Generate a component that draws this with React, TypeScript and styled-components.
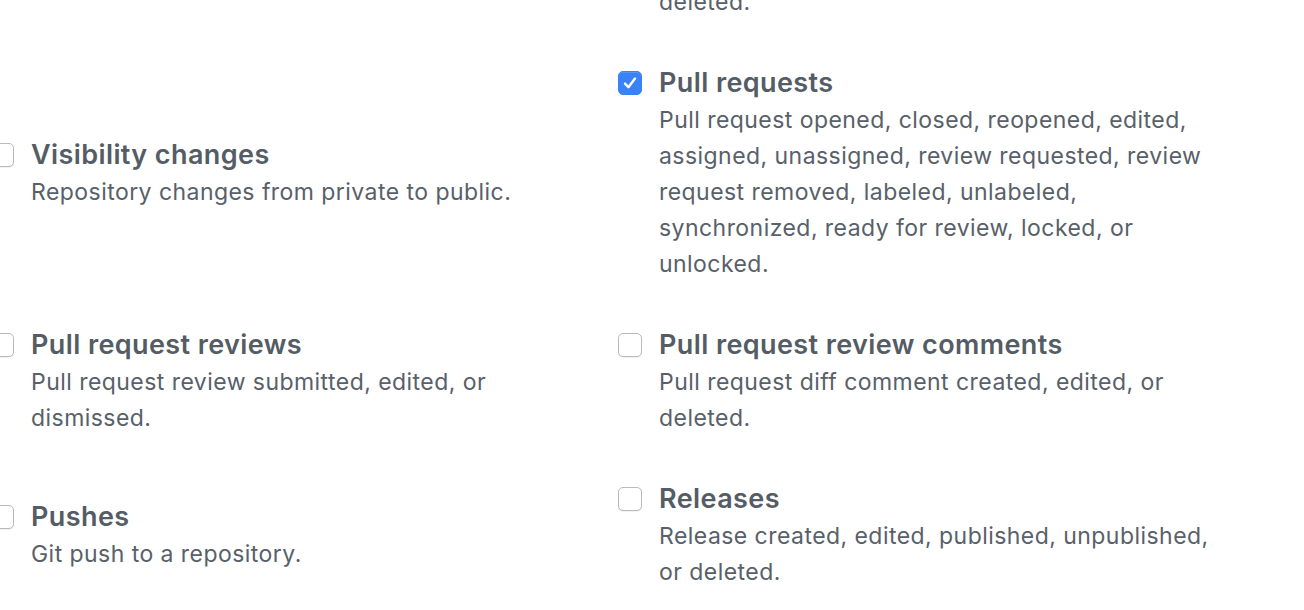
import React from "react";
import styled, { createGlobalStyle } from "styled-components";

const GlobalStyle = createGlobalStyle`
  html, body {
    margin: 0;
    padding: 0;
    background: #ffffff;
    overflow: hidden;
  }
  body {
    font-family: Inter, "Noto Sans", "Liberation Sans", sans-serif;
  }
`;

const Page = styled.div`
  width: 1304px;
  height: 610px;
  overflow: hidden;
`;

const EventList = styled.ul`
  list-style: none;
  margin: -89px 0 0 -10px;
  padding: 0;
  display: grid;
  grid-template-columns: 628px 628px;
  row-gap: 45px;
  align-items: center;
`;

const EventItem = styled.li`
  display: flex;
  align-items: flex-start;
  gap: 17px;
  padding-right: 32px;
`;

const Box = styled.span<{ $checked?: boolean }>`
  flex: none;
  box-sizing: border-box;
  width: 24px;
  height: 24px;
  margin-top: 6px;
  border-radius: 5px;
  display: flex;
  align-items: center;
  justify-content: center;
  background: ${(p) => (p.$checked ? "#3a82f7" : "#ffffff")};
  border: 1px solid ${(p) => (p.$checked ? "#3a82f7" : "#b9b9b9")};
  box-shadow: ${(p) =>
    p.$checked ? "inset 0 1px 0 rgba(255,255,255,0.15)" : "0 1px 1px rgba(0,0,0,0.06)"};
`;

const Body = styled.div`
  display: flex;
  flex-direction: column;
  min-width: 0;
`;

const Title = styled.span`
  font-size: 27px;
  line-height: 36px;
  font-weight: 600;
  letter-spacing: 0.4px;
  color: #545c65;
`;

const Description = styled.span`
  margin-top: 1px;
  font-size: 23px;
  line-height: 36px;
  letter-spacing: 0.45px;
  color: #586069;
`;

type Ev = { title: string; desc: string; checked?: boolean };

const events: Ev[] = [
  { title: "Projects", desc: "Project created, updated, or deleted." },
  { title: "Project columns", desc: "Project column created, updated, moved, or deleted." },
  { title: "Visibility changes", desc: "Repository changes from private to public." },
  {
    title: "Pull requests",
    checked: true,
    desc:
      "Pull request opened, closed, reopened, edited, assigned, unassigned, review requested, review request removed, labeled, unlabeled, synchronized, ready for review, locked, or unlocked.",
  },
  { title: "Pull request reviews", desc: "Pull request review submitted, edited, or dismissed." },
  { title: "Pull request review comments", desc: "Pull request diff comment created, edited, or deleted." },
  { title: "Pushes", desc: "Git push to a repository." },
  { title: "Releases", desc: "Release created, edited, published, unpublished, or deleted." },
];

const Check = () => (
  <svg width="18" height="18" viewBox="0 0 18 18" fill="none">
    <path d="M4 9.6 L7.4 13.2 L14 4.6" stroke="#ffffff" strokeWidth="2.4" strokeLinecap="round" strokeLinejoin="round" />
  </svg>
);

export default function App() {
  return (
    <Page>
      <GlobalStyle />
      <EventList>
        {events.map((e) => (
          <EventItem key={e.title}>
            <Box $checked={e.checked}>{e.checked && <Check />}</Box>
            <Body>
              <Title>{e.title}</Title>
              <Description>{e.desc}</Description>
            </Body>
          </EventItem>
        ))}
      </EventList>
    </Page>
  );
}
